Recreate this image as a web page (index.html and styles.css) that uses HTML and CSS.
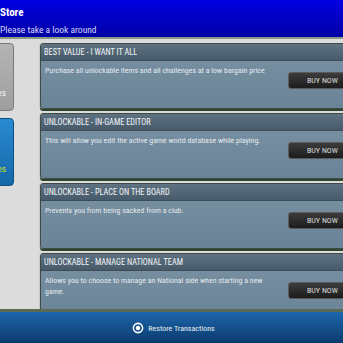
FILE: index.html
```html
<!DOCTYPE html>
<html>
<head>
<meta charset="utf-8">
<link rel="stylesheet" href="styles.css">
</head>
<body>
<div class="app">
  <header class="top">
    <div class="title">Store</div>
    <div class="subtitle">Please take a look around</div>
  </header>
  <main class="main">
    <nav class="side">
      <div class="tab tab-grey"><span>Unlockables</span></div>
      <div class="tab tab-blue"><span>Challenges</span></div>
    </nav>
    <section class="list">
      <div class="card">
        <div class="card-head">BEST VALUE - I WANT IT ALL</div>
        <div class="card-body">
          <p class="desc">Purchase all unlockable items and all challenges at a low bargain price</p>
          <div class="buy">BUY NOW</div>
        </div>
      </div>
      <div class="card">
        <div class="card-head">UNLOCKABLE - IN-GAME EDITOR</div>
        <div class="card-body">
          <p class="desc">This will allow you edit the active game world database while playing.</p>
          <div class="buy">BUY NOW</div>
        </div>
      </div>
      <div class="card">
        <div class="card-head">UNLOCKABLE - PLACE ON THE BOARD</div>
        <div class="card-body">
          <p class="desc">Prevents you from being sacked from a club.</p>
          <div class="buy">BUY NOW</div>
        </div>
      </div>
      <div class="card">
        <div class="card-head">UNLOCKABLE - MANAGE NATIONAL TEAM</div>
        <div class="card-body">
          <p class="desc">Allows you to choose to manage an National side when starting a new game.</p>
          <div class="buy">BUY NOW</div>
        </div>
      </div>
    </section>
  </main>
  <footer class="bottom">
    <svg class="ico" width="12" height="12" viewBox="0 0 12 12"><circle cx="6" cy="6" r="4.6" fill="none" stroke="#fff" stroke-width="1.6"/><circle cx="6" cy="6" r="2.2" fill="#fff"/></svg>
    <span class="restore">Restore Transactions</span>
  </footer>
</div>
</body>
</html>
```
FILE: styles.css
```css
html, body {
  margin: 0;
  padding: 0;
}
body {
  width: 343px;
  height: 343px;
  overflow: hidden;
  font-family: "Roboto Condensed", "Liberation Sans Narrow", "DejaVu Sans Condensed", Roboto, sans-serif;
  background: #dcdcdc;
}
.app {
  display: flex;
  flex-direction: column;
  height: 343px;
}
.top {
  height: 39px;
  flex: none;
  background: linear-gradient(#0000e2, #0000a6);
  border-bottom: 2px solid #8c9c80;
  box-sizing: border-box;
  padding: 6px 0 0 0;
  color: #fff;
}
.title {
  font-weight: bold;
  font-size: 11px;
  line-height: 14px;
}
.subtitle {
  font-size: 9.5px;
  line-height: 14px;
  color: #d8d8f4;
  margin-top: 3px;
}
.main {
  flex: 1;
  display: flex;
  overflow: hidden;
  padding-top: 4px;
  min-height: 0;
}
.side {
  width: 14px;
  flex: none;
  display: flex;
  flex-direction: column;
  align-items: flex-end;
  gap: 7px;
  overflow: hidden;
}
.tab {
  width: 80px;
  flex: none;
  height: 68px;
  box-sizing: border-box;
  border-radius: 4px;
  display: flex;
  align-items: flex-end;
  justify-content: flex-end;
  padding: 0 7px 12px 0;
  font-size: 9.5px;
}
.tab-grey {
  background: linear-gradient(#b4b4b4, #9e9e9e);
  border: 1px solid #7a7a7a;
  color: #f2f2f2;
}
.tab-blue {
  background: linear-gradient(#2a8ad0, #1568a8);
  border: 1px solid #0f4f80;
  color: #c8e61a;
  padding-bottom: 11px;
}
.list {
  margin-left: 26px;
  width: 325px;
  flex: none;
  display: flex;
  flex-direction: column;
  gap: 4px;
}
.card {
  flex: none;
  height: 66px;
  box-sizing: border-box;
  border: 1px solid #3e4c44;
  border-radius: 3px;
  box-shadow: 0 2px 0 #2e4630, -1px 0 0 #c4ccc4;
  background: linear-gradient(#7a92a4, #6a8396);
  display: flex;
  flex-direction: column;
  overflow: hidden;
}
.card-head {
  height: 16px;
  flex: none;
  line-height: 16px;
  padding-left: 3px;
  background: linear-gradient(#5e7282, #475a6a);
  border-bottom: 1px solid #3c4c58;
  color: #f4f6f8;
  font-size: 8.3px;
}
.card-body {
  flex: 1;
  display: flex;
  justify-content: space-between;
  padding: 4px 0 0 4px;
  gap: 10px;
}
.desc {
  margin: 0;
  font-size: 7.9px;
  line-height: 11px;
  color: #e4eaee;
  width: 226px;
}
.buy {
  flex: none;
  align-self: flex-start;
  margin-top: 7px;
  width: 72px;
  height: 17px;
  box-sizing: border-box;
  border: 1px solid #5a5a5a;
  border-radius: 3px;
  background: linear-gradient(#3c3c3c, #1c1c1c);
  color: #dcdcdc;
  font-size: 8px;
  line-height: 15px;
  padding-left: 18px;
  margin-right: 4px;
}
.bottom {
  height: 34px;
  flex: none;
  box-sizing: border-box;
  border-top: 3px solid #5a6a54;
  background: linear-gradient(#1d66ac, #0b3b6c);
  display: flex;
  align-items: center;
  justify-content: center;
  gap: 4px;
  padding-left: 4px;
  padding-top: 1px;
}
.restore {
  color: #e8eef4;
  font-size: 8px;
}
```
